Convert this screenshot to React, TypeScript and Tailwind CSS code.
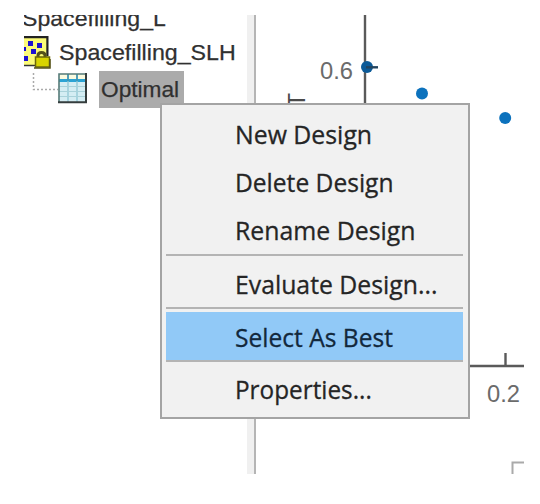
import type { ReactNode } from "react";

function MenuItem({ className, stretch = "scale-x-[0.955]", children }: { className: string; stretch?: string; children: ReactNode }) {
  return (
    <div className={`flex items-center pl-[69px] ${className}`}>
      <span className={`origin-left whitespace-nowrap text-[26px] leading-none [-webkit-text-stroke:0.3px] ${stretch}`}>{children}</span>
    </div>
  );
}

function Separator() {
  return <div className="h-[2px] shrink-0 bg-[#b4b4b4]" />;
}

function ContextMenu() {
  return (
    <div className="absolute left-[136px] top-[88px] flex h-[316px] w-[310px] flex-col border-2 border-[#a4a4a4] bg-[#f1f1f1] pl-[4px] pr-[5px] pt-[5px] font-['Open_Sans','Noto_Sans',sans-serif] text-[#252525]">
      <MenuItem className="h-12">New Design</MenuItem>
      <MenuItem className="h-12" stretch="scale-x-[0.945]">Delete Design</MenuItem>
      <MenuItem className="h-12">Rename Design</MenuItem>
      <Separator />
      <MenuItem className="h-[51px] pt-1" stretch="scale-x-[0.953]">Evaluate Design...</MenuItem>
      <Separator />
      <MenuItem className="mt-[3px] h-12 bg-[#91c9f7] pt-[2px] text-[#12283c]" stretch="scale-x-[0.945]">Select As Best</MenuItem>
      <Separator />
      <MenuItem className="h-[54px]" stretch="scale-x-[0.935]">Properties...</MenuItem>
    </div>
  );
}

function LockedPlotIcon() {
  return (
    <svg width="28" height="34" viewBox="0 0 28 34" className="shrink-0">
      <rect x="0" y="1" width="24" height="29" fill="#fbfb78" />
      <path d="M0 1.2H23.4V20" fill="none" stroke="#222" strokeWidth="2.2" />
      <path d="M0 29.5H12" stroke="#333" strokeWidth="1.5" />
      <g fill="#1c10d0">
        <rect x="4" y="5" width="5" height="5" />
        <rect x="13" y="7" width="5" height="5" />
        <rect x="7" y="13" width="5" height="5" />
        <rect x="0" y="11" width="2" height="4" />
        <rect x="0" y="20" width="4" height="5" />
      </g>
      <path d="M14 22V19.5Q14 16.5 17.5 16.5Q21 16.5 21 19.5V22" fill="none" stroke="#55521a" strokeWidth="3" />
      <rect x="11.5" y="21" width="14" height="10" fill="#d8d400" stroke="#6b6808" strokeWidth="1.5" />
      <path d="M10 32H26V23" fill="none" stroke="#55521a" strokeWidth="1.5" />
    </svg>
  );
}

function TableIcon() {
  return (
    <svg width="30" height="31" viewBox="0 0 30 31" className="shrink-0">
      <rect x="1" y="1" width="27" height="28" fill="#d4edf3" />
      <rect x="1" y="1" width="27" height="6" fill="#fbfbe0" />
      <rect x="1" y="6" width="27" height="3" fill="#2ba3d4" />
      <path d="M10 1V29M19 1V29" stroke="#8fc7d5" strokeWidth="1.3" />
      <path d="M10 1V8M19 1V8" stroke="#318aaa" strokeWidth="1.5" />
      <path d="M1 13.5H28M1 18.5H28M1 23.5H28" stroke="#a9d2da" strokeWidth="1" />
      <path d="M1 29V1H28" fill="none" stroke="#557b78" strokeWidth="1.6" />
      <path d="M28 0V29.3H0" fill="none" stroke="#353d3d" strokeWidth="2" />
    </svg>
  );
}

function DesignTree() {
  return (
    <div className="flex w-[223px] shrink-0 flex-col font-['Liberation_Sans',Arial,sans-serif] text-[22px] leading-none text-[#303030] [-webkit-text-stroke:0.25px]">
      <div className="h-[19px] whitespace-nowrap">
        <div className="-mt-[7px] -ml-[2px] origin-left scale-x-[1.05]">Spacefilling_L</div>
      </div>
      <div className="flex h-[37px] items-center">
        <LockedPlotIcon />
        <span className="ml-[7px] origin-left scale-x-[1.055] whitespace-nowrap">Spacefilling_SLH</span>
      </div>
      <div className="flex h-[37px]">
        <svg width="34" height="37" viewBox="0 0 34 37" className="shrink-0">
          <path d="M9.5 2V18.5H34" fill="none" stroke="#aaa" strokeWidth="1.5" strokeDasharray="2 2" />
        </svg>
        <div className="pt-[2px]">
          <TableIcon />
        </div>
        <div className="ml-[11px] flex w-[85px] items-center bg-[#ababab] pl-[2px]">
          <span className="origin-left scale-x-[1.03]">Optimal</span>
        </div>
      </div>
    </div>
  );
}

function Plot() {
  return (
    <svg width="268" height="459" viewBox="256 15 268 459" className="shrink-0" fontFamily="'Liberation Sans', Arial, sans-serif" fontSize="24" fill="#6b6b6b">
      <path d="M365 15V366H524" fill="none" stroke="#5a5a5a" strokeWidth="2.4" />
      <path d="M505.500 353V366" stroke="#5a5a5a" strokeWidth="2.4" />
      <g fill="#0c72bd">
        <circle cx="367" cy="67" r="6" fill="#0b5a98" />
        <circle cx="422" cy="93.5" r="6" />
        <circle cx="505.200" cy="118" r="6" />
      </g>
      <path d="M366 67.300H378" stroke="#23445f" strokeWidth="2.4" />
      <text x="320" y="79" textLength="33" lengthAdjust="spacingAndGlyphs">0.6</text>
      <text x="487" y="402" textLength="33" lengthAdjust="spacingAndGlyphs">0.2</text>
      <text transform="translate(305 107.500) rotate(-90)" fill="#4a4a4a">T</text>
      <path d="M512.500 474V462.500H524" fill="none" stroke="#aaa" strokeWidth="2" />
    </svg>
  );
}

export default function App() {
  return (
    <div className="h-[504px] w-[540px] overflow-hidden bg-white pl-6 pt-[15px]">
      <div className="relative flex h-[459px] w-[500px] overflow-hidden">
        <DesignTree />
        <div className="w-[9px] shrink-0 border-r-2 border-[#b5b5b5] bg-[#f0f0f0]" />
        <Plot />
        <ContextMenu />
      </div>
    </div>
  );
}
